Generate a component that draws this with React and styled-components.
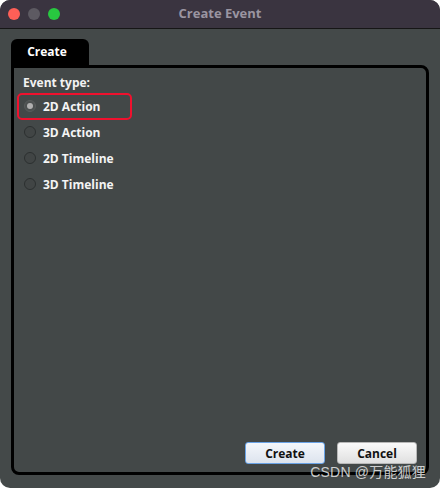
import React, { useState } from "react";
import styled, { createGlobalStyle } from "styled-components";

const GlobalStyle = createGlobalStyle`
  html, body {
    margin: 0;
    padding: 0;
    background: #ffffff;
  }
  body {
    font-family: "Open Sans", "DejaVu Sans", sans-serif;
  }
`;

const EVENT_TYPES = ["2D Action", "3D Action", "2D Timeline", "3D Timeline"];

const App = () => {
  const [selected, setSelected] = useState("2D Action");

  return (
    <>
      <GlobalStyle />
      <Window>
        <TitleBar>
          <Lights>
            <Light color="#fe5f57" />
            <Light color="#5d5a62" />
            <Light color="#28c840" />
          </Lights>
          <Title>Create Event</Title>
        </TitleBar>
        <Body>
          <TabStrip>
            <Tab>Create</Tab>
          </TabStrip>
          <Panel>
            <Label>Event type:</Label>
            <RadioList>
              {EVENT_TYPES.map((type) => (
                <RadioRow
                  key={type}
                  $highlighted={type === "2D Action"}
                  onClick={() => setSelected(type)}
                >
                  <RadioCircle $checked={selected === type} />
                  <RadioText>{type}</RadioText>
                </RadioRow>
              ))}
            </RadioList>
            <ButtonRow>
              <Button $focused>Create</Button>
              <Button>Cancel</Button>
            </ButtonRow>
          </Panel>
        </Body>
        <Watermark>CSDN @万能狐狸</Watermark>
      </Window>
    </>
  );
};

export default App;

const Window = styled.div`
  position: relative;
  box-sizing: border-box;
  width: 440px;
  height: 488px;
  display: flex;
  flex-direction: column;
  background: #444949;
  border-radius: 10px;
  overflow: hidden;
`;

const TitleBar = styled.div`
  position: relative;
  height: 28px;
  flex-shrink: 0;
  display: flex;
  align-items: center;
  justify-content: center;
  background: #3a3440;
  border-bottom: 1px solid #161616;
`;

const Lights = styled.div`
  position: absolute;
  left: 8px;
  top: 8px;
  display: flex;
  gap: 8px;
`;

const Light = styled.span`
  width: 12px;
  height: 12px;
  border-radius: 50%;
  background: ${(p) => p.color};
`;

const Title = styled.div`
  font-size: 13px;
  font-weight: 700;
  color: #9a95a1;
  margin-top: -2px;
`;

const Body = styled.div`
  flex: 1;
  display: flex;
  flex-direction: column;
  padding: 10px 11px 13px 11px;
`;

const TabStrip = styled.div`
  display: flex;
`;

const Tab = styled.div`
  width: 78px;
  height: 26px;
  display: flex;
  align-items: center;
  justify-content: center;
  padding-right: 6px;
  padding-bottom: 2px;
  box-sizing: border-box;
  background: #000;
  color: #fff;
  font-size: 12px;
  font-weight: 700;
  border-radius: 6px 6px 0 0;
`;

const Panel = styled.div`
  flex: 1;
  display: flex;
  flex-direction: column;
  border: 3px solid #000;
  border-radius: 0 8px 8px 8px;
  padding: 7px 9px 8px 6px;
  background: #434848;
`;

const Label = styled.div`
  font-size: 12px;
  font-weight: 700;
  color: #f2f2f2;
  padding-left: 3px;
  line-height: 16px;
`;

const RadioList = styled.div`
  display: flex;
  flex-direction: column;
  margin-top: 2px;
`;

const RadioRow = styled.div`
  position: relative;
  height: 26px;
  display: flex;
  align-items: center;
  gap: 7px;
  padding-left: 4px;
  cursor: pointer;

  &::after {
    content: "";
    display: ${(p) => (p.$highlighted ? "block" : "none")};
    position: absolute;
    left: -3px;
    top: 0px;
    width: 115px;
    height: 27px;
    box-sizing: border-box;
    border: 2.5px solid #f0112e;
    border-radius: 5px;
  }
`;

const RadioCircle = styled.span`
  position: relative;
  width: 12px;
  height: 12px;
  box-sizing: border-box;
  border-radius: 50%;
  background: ${(p) => (p.$checked ? "#4c5050" : "#414545")};
  border: 1px solid ${(p) => (p.$checked ? "#585c5c" : "#2c3030")};

  &::after {
    content: "";
    display: ${(p) => (p.$checked ? "block" : "none")};
    position: absolute;
    left: 2px;
    top: 2px;
    width: 6px;
    height: 6px;
    border-radius: 50%;
    background: #b0b0b0;
  }
`;

const RadioText = styled.span`
  font-size: 12px;
  font-weight: 700;
  color: #f4f4f4;
`;

const ButtonRow = styled.div`
  margin-top: auto;
  display: flex;
  justify-content: flex-end;
  gap: 12px;
`;

const Button = styled.button`
  width: 80px;
  height: 22px;
  padding: 0;
  font-family: "Open Sans", "DejaVu Sans", sans-serif;
  font-size: 12px;
  font-weight: 700;
  color: #111;
  border-radius: 3px;
  border: 1px solid ${(p) => (p.$focused ? "#6aa3e6" : "#b8b8b8")};
  background: ${(p) =>
    p.$focused
      ? "linear-gradient(#f4f7fb, #dde4ee)"
      : "linear-gradient(#fafafa, #e0e0e0)"};
  cursor: pointer;
`;

const Watermark = styled.div`
  position: absolute;
  right: 14px;
  bottom: 8px;
  font-family: "Liberation Sans", "Noto Sans CJK SC", sans-serif;
  font-size: 14px;
  line-height: 16px;
  letter-spacing: 0.2px;
  color: rgba(232, 232, 232, 0.85);
`;
